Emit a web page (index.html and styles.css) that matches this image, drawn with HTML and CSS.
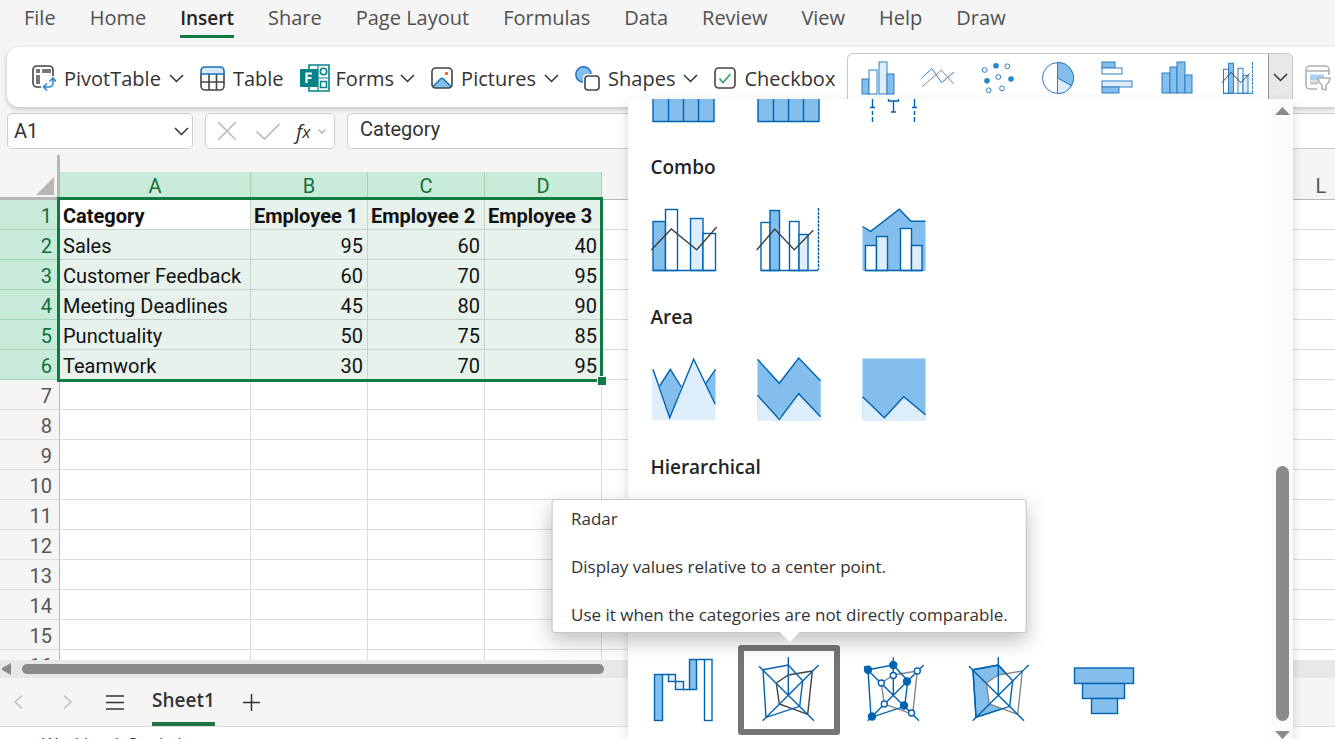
FILE: index.html
```html
<!DOCTYPE html>
<html lang="en">
<head>
    <meta charset="UTF-8">
    <meta name="viewport" content="width=device-width, initial-scale=1.0">
    <title>Spreadsheet</title>
    <link rel="stylesheet" href="styles.css">
</head>
<body>

    <nav class="menu">
        <button>File</button>
        <button>Home</button>
        <button class="active">Insert</button>
        <button>Share</button>
        <button>Page Layout</button>
        <button>Formulas</button>
        <button>Data</button>
        <button>Review</button>
        <button>View</button>
        <button>Help</button>
        <button>Draw</button>
    </nav>

    <div class="toolbar">
        <button class="tool">
            <svg width="24" height="26" viewBox="0 0 24 26" fill="none">
                <path d="M9 22H5a4 4 0 0 1-4-4V5a4 4 0 0 1 4-4h12a4 4 0 0 1 4 4v6" stroke="#444" stroke-width="1.6"/>
                <path d="M4 4h4v4H4zM10 4h9v4h-9zM4 10h4v9H4z" fill="#777"/>
                <path d="M12 22h5a4 4 0 0 0 4-4v-4M15 18.500l-3.500 3.500 3.500 3.500M17.500 16.500L21 13l3 3.500" stroke="#2b88d8" stroke-width="1.600"/>
            </svg>
            PivotTable
            <svg class="chevron" width="15" height="9" viewBox="0 0 15 9"><path d="M1 1l6.500 6.500L14 1"/></svg>
        </button>
        <button class="tool">
            <svg width="25" height="25" viewBox="0 0 25 25" fill="none">
                <path d="M1 8V5a4 4 0 0 1 4-4h15a4 4 0 0 1 4 4v3z" fill="#d5e9fb"/>
                <path d="M1 8v12a4 4 0 0 0 4 4h15a4 4 0 0 0 4-4V8M1 16h23M9 8v16M16.500 8v16" stroke="#444" stroke-width="1.600"/>
                <path d="M1 8V5a4 4 0 0 1 4-4h15a4 4 0 0 1 4 4v3z" stroke="#1a6fbb" stroke-width="1.600"/>
            </svg>
            Table
        </button>
        <button class="tool forms">
            <svg width="30" height="28" viewBox="0 0 30 28" fill="none">
                <path d="M9 1h20v26H9z" fill="#fff" stroke="#038387" stroke-width="1.600"/>
                <path d="M18 1v26M18 14h11" stroke="#038387" stroke-width="1.200"/>
                <circle cx="23.500" cy="7.500" r="3.200" stroke="#038387" stroke-width="1.600"/>
                <path d="M20.500 17.500h6v6h-6z" stroke="#038387" stroke-width="1.600"/>
                <rect y="5" width="18" height="18" rx="1" fill="#038387"/>
                <path d="M6.500 19V9.500h5.500M6.500 14h5" stroke="#fff" stroke-width="2.200"/>
            </svg>
            Forms
            <svg class="chevron" width="15" height="9" viewBox="0 0 15 9"><path d="M1 1l6.500 6.500L14 1"/></svg>
        </button>
        <button class="tool">
            <svg width="22" height="22" viewBox="0 0 22 22" fill="none">
                <path d="M2 19.500l7.500-7.500q1.500-1.500 3 0l7.500 7.500L18 21H4z" fill="#83beec"/>
                <path d="M2 19.500l7.500-7.500q1.500-1.500 3 0l7.500 7.500" stroke="#1a6fbb" stroke-width="1.500"/>
                <rect x="1" y="1" width="20" height="20" rx="3.500" stroke="#444" stroke-width="1.600"/>
                <circle cx="15.500" cy="6.500" r="1.700" fill="#e06c1f"/>
            </svg>
            Pictures
            <svg class="chevron" width="15" height="9" viewBox="0 0 15 9"><path d="M1 1l6.500 6.500L14 1"/></svg>
        </button>
        <button class="tool">
            <svg width="25" height="25" viewBox="0 0 25 25" fill="none">
                <circle cx="8.500" cy="8.500" r="7.700" fill="#83beec" stroke="#1a6fbb" stroke-width="1.500"/>
                <rect x="8" y="8" width="18" height="18" rx="4" fill="#fff"/>
                <rect x="10" y="10" width="14" height="14" rx="3" stroke="#444" stroke-width="1.600"/>
            </svg>
            Shapes
            <svg class="chevron" width="15" height="9" viewBox="0 0 15 9"><path d="M1 1l6.500 6.500L14 1"/></svg>
        </button>
        <button class="tool last">
            <svg width="22" height="22" viewBox="0 0 22 22" fill="none">
                <rect x="1" y="1" width="20" height="20" rx="3.500" stroke="#444" stroke-width="1.600"/>
                <path d="M5.500 11.500l3.500 4 7.500-8.500" stroke="#2ea158" stroke-width="1.500"/>
            </svg>
            Checkbox
        </button>

        <div class="gallery">
            <button aria-label="Column">
                <svg class="small" viewBox="0 0 32 32">
                    <rect class="b" x="0" y="17" width="7" height="15"/>
                    <rect class="w" x="7" y="8" width="8" height="24"/>
                    <rect class="l" x="17" y="0" width="8" height="32"/>
                    <rect class="b" x="25" y="12" width="7" height="20"/>
                </svg>
            </button>
            <button aria-label="Line">
                <svg class="small" viewBox="0 0 32 32">
                    <path class="g" d="M0 24.700L19.300 8.300 31.700 21.700"/>
                    <path class="n" d="M0 15.700L10 6.700l9.700 14L32 10"/>
                </svg>
            </button>
            <button aria-label="Scatter">
                <svg class="small" viewBox="0 0 32 32">
                    <circle class="w" cx="2.700" cy="8" r="2.400"/>
                    <circle class="w" cx="25.300" cy="4.300" r="2.400"/>
                    <circle class="w" cx="16.300" cy="15" r="2.400"/>
                    <circle class="w" cx="20" cy="26.300" r="2.400"/>
                    <circle class="w" cx="6.700" cy="28.300" r="2.400"/>
                    <circle class="dot" cx="14" cy="3.700" r="2.800"/>
                    <circle class="dot" cx="5" cy="18.700" r="2.800"/>
                    <circle class="dot" cx="29" cy="17" r="2.800"/>
                </svg>
            </button>
            <button aria-label="Pie">
                <svg class="small" viewBox="0 0 32 32">
                    <circle class="w" cx="16" cy="16" r="15.500"/>
                    <path class="b" d="M15.500 16V.500A15.500 15.500 0 0 1 29.400 23.700z"/>
                    <path class="l" d="M15.500 16l13.900 7.700A15.500 15.500 0 0 1 15.500 31.500z"/>
                </svg>
            </button>
            <button aria-label="Bar">
                <svg class="small" viewBox="0 0 32 32">
                    <rect class="b" x="0" y="0" width="13" height="6"/>
                    <rect class="w" x="0" y="6" width="20" height="6"/>
                    <rect class="l" x="0" y="19" width="30" height="6"/>
                    <rect class="b" x="0" y="25" width="17" height="6"/>
                </svg>
            </button>
            <button aria-label="Histogram">
                <svg class="small" viewBox="0 0 32 32">
                    <rect class="b" x="0" y="11" width="8" height="20"/>
                    <rect class="b" x="8" y="5" width="7" height="26"/>
                    <rect class="b" x="15" y="0" width="8" height="31"/>
                    <rect class="b" x="23" y="13" width="7" height="18"/>
                </svg>
            </button>
            <button aria-label="Combo">
                <svg class="small" viewBox="0 0 32 32">
                    <rect class="w" x="1.500" y="7.300" width="5" height="24"/>
                    <rect class="b" x="6.500" y="1.300" width="5" height="30"/>
                    <rect class="w" x="16" y="6.300" width="5" height="25"/>
                    <rect class="l" x="21" y="13.300" width="5" height="18"/>
                    <path class="n" d="M1 31.300h30"/>
                    <path class="n dash" d="M30.500 0v31"/>
                    <path class="k" d="M0 20.700L9 10.300l9.700 10.400 9.300-9.400"/>
                </svg>
            </button>
            <button class="more" aria-label="More charts">
                <svg class="chevron" width="15" height="9" viewBox="0 0 15 9"><path d="M1 1l6.500 6.500L14 1"/></svg>
            </button>

            <div class="charts">
                <div class="chart-list">
                    <div class="chart-row cut">
                        <button aria-label="Histogram chart">
                            <svg width="64" height="24" viewBox="0 0 64 24"><path class="b" d="M1-4h61v26.500H1zM16.500-4v26M31.500-4v26M46.500-4v26"/></svg>
                        </button>
                        <button aria-label="Pareto chart">
                            <svg width="64" height="24" viewBox="0 0 64 24"><path class="b" d="M1-4h61v26.500H1zM16.500-4v26M31.500-4v26M46.500-4v26"/></svg>
                        </button>
                        <button aria-label="Box chart">
                            <svg width="64" height="24" viewBox="0 0 64 24">
                                <path class="n" d="M10.500-2V8.500M8 8.500h5M52.500-2V8.500M50 8.500h5M26.500 0v2h10V0M31.500 2v11M29 13h5"/>
                                <path class="n" d="M10.500 12v4M10.500 18v5M52.500 12v4M52.500 18v5"/>
                            </svg>
                        </button>
                    </div>

                    <section>
                        <h3>Combo</h3>
                        <div class="chart-row">
                            <button aria-label="Column and line">
                                <svg width="64" height="64" viewBox="0 0 64 64">
                                    <rect class="b" x="1" y="13.500" width="12.500" height="49"/>
                                    <rect class="w" x="13.500" y="1.500" width="12" height="61"/>
                                    <rect class="l" x="38.500" y="10.500" width="12.500" height="52"/>
                                    <rect class="w" x="51" y="25.500" width="12.500" height="37"/>
                                    <path class="n" d="M1 62.500h62"/>
                                    <path class="k" d="M-.700 42l20-21 25.400 20.700 20-22.700"/>
                                </svg>
                            </button>
                            <button aria-label="Column and line on secondary axis">
                                <svg width="64" height="64" viewBox="0 0 64 64">
                                    <rect class="w" x="4" y="14.500" width="9" height="48"/>
                                    <rect class="b" x="13" y="2.500" width="9.500" height="60"/>
                                    <rect class="w" x="32.500" y="13.500" width="9.500" height="49"/>
                                    <rect class="l" x="42" y="26.500" width="9" height="36"/>
                                    <path class="n" d="M4 62.500h57"/>
                                    <path class="n dash" d="M61.500 0v62"/>
                                    <path class="k" d="M-.300 42l18-21 19.600 20.700 19-19.400"/>
                                </svg>
                            </button>
                            <button aria-label="Area and column">
                                <svg width="64" height="64" viewBox="0 0 64 64">
                                    <path fill="#83beec" d="M.500 19l8.200 4.300 28.600-22 11.700 12h14.500V63H.500z"/>
                                    <path class="n" d="M.500 18.500l8.200 4.800 28.600-22 11.700 12h14.500"/>
                                    <rect class="w" x="3.500" y="37.500" width="11" height="25"/>
                                    <rect class="l" x="14.500" y="28.500" width="11" height="34"/>
                                    <rect class="w" x="38.500" y="20.500" width="11" height="42"/>
                                    <rect class="l" x="49.500" y="37.500" width="10.500" height="25"/>
                                    <path class="n" d="M3 62.500h58"/>
                                </svg>
                            </button>
                        </div>
                    </section>

                    <section>
                        <h3>Area</h3>
                        <div class="chart-row">
                            <button aria-label="Area chart">
                                <svg width="64" height="64" viewBox="0 0 64 64">
                                    <path fill="#ddedfb" d="M0 11l1 .300 16.700 48.400L41.700 1.300 63.500 46v16H0z"/>
                                    <path fill="#83beec" d="M7.700 28l10.600-16.700L29.300 29 17.700 59.700zM63.500 11.300L53.700 25.700l9.800 20z"/>
                                    <path class="n" d="M7.700 28l10.600-16.700L29.300 29M63.500 11.300L53.700 25.700"/>
                                    <path class="n" d="M1 11.300l16.700 48.400L41.700 1.300l21.500 45"/>
                                </svg>
                            </button>
                            <button aria-label="Stacked area">
                                <svg width="64" height="64" viewBox="0 0 64 64">
                                    <path fill="#83beec" d="M.500 1.300l21.800 24L41.700 0l22 22.700v36H.500z"/>
                                    <path fill="#ddedfb" d="M.500 37.300l21.800 24 19.400-25.600 22 23V63H.500z"/>
                                    <path class="n" d="M.500 1.300l21.800 24L41.700 0l21.800 22.700M.500 37.300l21.800 24 19.400-25.600 21.800 23"/>
                                </svg>
                            </button>
                            <button aria-label="100% stacked area">
                                <svg width="64" height="64" viewBox="0 0 64 64">
                                    <path fill="#83beec" d="M.500.500h63V60H.500z"/>
                                    <path fill="#ddedfb" d="M.500 38.700l21.800 21 19.400-21 21.800 18V63H.500z"/>
                                    <path class="n" d="M.500 38.700l21.800 21 19.400-21 21.800 18"/>
                                </svg>
                            </button>
                        </div>
                    </section>

                    <section>
                        <h3>Hierarchical</h3>
                    </section>

                    <section class="other">
                        <div class="chart-row">
                            <button aria-label="Waterfall">
                                <svg width="64" height="64" viewBox="0 0 64 64">
                                    <rect class="b" x="2.500" y="16.500" width="8" height="46"/>
                                    <rect class="l" x="16.500" y="16.500" width="7" height="7"/>
                                    <rect class="l" x="23.500" y="23.500" width="8" height="8"/>
                                    <path class="n" d="M10 16.500h7M31 31.500h7M45 1.500h8"/>
                                    <rect class="b" x="37.500" y="1.500" width="7" height="30"/>
                                    <rect class="w" x="52.500" y="1.500" width="7.500" height="61"/>
                                </svg>
                            </button>
                            <div class="tip-anchor">
                                <button class="selected" aria-label="Radar" aria-describedby="radarTip">
                                    <svg width="64" height="64" viewBox="0 0 64 64">
                                        <path class="k thin" d="M55.300 13l-24 4-12 8 3 21 28.400 10.300z"/>
                                        <path class="n" d="M6 11.700L31.300 7l14.400 15.700-3 25.600L9 59.300z"/>
                                        <path class="n" d="M31.300-.700V37M2 8.300l55 54.400M61.700 7l-56 55.700"/>
                                    </svg>
                                </button>
                                <div class="tooltip" id="radarTip" role="tooltip">
                                    <p>Radar</p>
                                    <p>Display values relative to a center point.</p>
                                    <p>Use it when the categories are not directly comparable.</p>
                                </div>
                            </div>
                            <button aria-label="Radar with markers">
                                <svg width="64" height="64" viewBox="0 0 64 64">
                                    <path class="g" d="M55.300 13l-24 4-12 8 3 21 28.400 10.300z"/>
                                    <path class="n" d="M6 11.700L31.300 7l14.400 15.700-3 25.600L9 59.300z"/>
                                    <path class="n" d="M31.300-.700V37M2 8.300l55 54.400M61.700 7l-56 55.700"/>
                                    <circle class="mark" cx="6" cy="11.700" r="3.500"/>
                                    <circle class="mark" cx="31.300" cy="7" r="3.500"/>
                                    <circle class="mark" cx="45" cy="23.500" r="3.500"/>
                                    <circle class="mark" cx="42" cy="47.500" r="3.500"/>
                                    <circle class="mark" cx="10" cy="58.500" r="3.500"/>
                                    <circle class="w" cx="55.300" cy="13" r="3"/>
                                    <circle class="w" cx="31.300" cy="17.500" r="3"/>
                                    <circle class="w" cx="19.300" cy="25" r="3"/>
                                    <circle class="w" cx="22.300" cy="46" r="3"/>
                                    <circle class="w" cx="49.500" cy="55" r="3"/>
                                </svg>
                            </button>
                            <button aria-label="Filled radar">
                                <svg width="64" height="64" viewBox="0 0 64 64">
                                    <path class="b" d="M6 11.700L31.300 7l14.400 15.700-3 25.600L9 59.300z"/>
                                    <path class="g white" d="M55.300 13l-24 4-12 8 3 21 28.400 10.300z"/>
                                    <path class="n" d="M6 11.700L31.300 7l14.400 15.700-3 25.600L9 59.300z"/>
                                    <path class="n" d="M31.300-.700V37M2 8.300l55 54.400M61.700 7l-56 55.700"/>
                                </svg>
                            </button>
                            <button aria-label="Funnel">
                                <svg width="64" height="64" viewBox="0 0 64 64">
                                    <rect class="b" x="2.500" y="10" width="59" height="15.500"/>
                                    <rect class="b" x="10.500" y="25.500" width="42" height="15"/>
                                    <rect class="b" x="19.500" y="40.500" width="26" height="15"/>
                                </svg>
                            </button>
                        </div>
                    </section>
                </div>
                <div class="vscroll">
                    <svg width="15" height="8" viewBox="0 0 15 8"><path d="M0 8L7.500 0 15 8z" fill="#8a8a8a"/></svg>
                    <div class="vthumb"></div>
                    <svg width="15" height="8" viewBox="0 0 15 8"><path d="M0 0h15L7.500 8z" fill="#8a8a8a"/></svg>
                </div>
            </div>
        </div>

        <button class="slicer" aria-label="Slicer">
            <svg width="26" height="26" viewBox="0 0 26 26" fill="none" stroke="#b0b0b0" stroke-width="1.600">
                <path d="M12 24H5a4 4 0 0 1-4-4V5a4 4 0 0 1 4-4h15a4 4 0 0 1 4 4v5M1 6h23"/>
                <path d="M5 11h14M5 14h8" stroke="#a9d0ee" stroke-width="3"/>
                <path d="M5 18h8" stroke="#c4c4c4" stroke-width="3"/>
                <path d="M13 13h12l-1 4-3 3v5l-4-1v-4l-3-3z" fill="#fff"/>
            </svg>
        </button>
    </div>

    <div class="formula-bar">
        <div class="name-box">
            <input type="text" value="A1" aria-label="Name box">
            <button aria-label="Open name list"><svg class="chevron" width="15" height="9" viewBox="0 0 15 9"><path d="M1 1l6.500 6.500L14 1"/></svg></button>
        </div>
        <div class="fx-box">
            <button aria-label="Cancel"><svg width="18" height="18" viewBox="0 0 18 18"><path d="M0 0l18 18M18 0L0 18" stroke="#b5b5b5" stroke-width="1.500"/></svg></button>
            <button aria-label="Enter"><svg width="24" height="17" viewBox="0 0 24 17" fill="none"><path d="M.500 8.500l8 7.500L23.500 1" stroke="#b5b5b5" stroke-width="1.500"/></svg></button>
            <button class="fx" aria-label="Insert function"><i>f</i><sub>x</sub><svg width="8" height="5" viewBox="0 0 8 5" fill="none"><path d="M.500.500L4 4 7.500.500" stroke="#b0b0b0" stroke-width="1.300"/></svg></button>
        </div>
        <input class="formula" type="text" value="Category" aria-label="Formula">
    </div>

    <div class="sheet">
        <table>
            <colgroup>
                <col class="col-num"><col class="col-a"><col class="col-n"><col class="col-n"><col class="col-n"><col><col class="col-l">
            </colgroup>
            <thead>
                <tr class="spacer"><td class="corner" rowspan="2"><svg width="18" height="18" viewBox="0 0 18 18"><path d="M18 0v18H0z" fill="#b7b7b7"/></svg></td><td colspan="6"></td></tr>
                <tr><th class="sel">A</th><th class="sel">B</th><th class="sel">C</th><th class="sel">D</th><th></th><th>L</th></tr>
            </thead>
            <tbody>
                <tr class="sel title"><th>1</th><td class="current">Category</td><td>Employee 1</td><td>Employee 2</td><td>Employee 3</td><td></td><td></td></tr>
                <tr class="sel"><th>2</th><td>Sales</td><td>95</td><td>60</td><td>40</td><td></td><td></td></tr>
                <tr class="sel"><th>3</th><td>Customer Feedback</td><td>60</td><td>70</td><td>95</td><td></td><td></td></tr>
                <tr class="sel"><th>4</th><td>Meeting Deadlines</td><td>45</td><td>80</td><td>90</td><td></td><td></td></tr>
                <tr class="sel"><th>5</th><td>Punctuality</td><td>50</td><td>75</td><td>85</td><td></td><td></td></tr>
                <tr class="sel"><th>6</th><td>Teamwork</td><td>30</td><td>70</td><td>95</td><td></td><td></td></tr>
                <tr><th>7</th><td></td><td></td><td></td><td></td><td></td><td></td></tr>
                <tr><th>8</th><td></td><td></td><td></td><td></td><td></td><td></td></tr>
                <tr><th>9</th><td></td><td></td><td></td><td></td><td></td><td></td></tr>
                <tr><th>10</th><td></td><td></td><td></td><td></td><td></td><td></td></tr>
                <tr><th>11</th><td></td><td></td><td></td><td></td><td></td><td></td></tr>
                <tr><th>12</th><td></td><td></td><td></td><td></td><td></td><td></td></tr>
                <tr><th>13</th><td></td><td></td><td></td><td></td><td></td><td></td></tr>
                <tr><th>14</th><td></td><td></td><td></td><td></td><td></td><td></td></tr>
                <tr><th>15</th><td></td><td></td><td></td><td></td><td></td><td></td></tr>
                <tr><th>16</th><td></td><td></td><td></td><td></td><td></td><td></td></tr>
            </tbody>
        </table>
        <div class="selection"></div>
    </div>

    <div class="hscroll">
        <svg width="9" height="12" viewBox="0 0 9 12"><path d="M9 0v12L0 7V5z" fill="#8a8a8a"/></svg>
        <div class="hthumb"></div>
    </div>

    <div class="sheet-tabs">
        <button class="arrow" aria-label="Previous sheet"><svg width="9" height="14" viewBox="0 0 9 14" fill="none"><path d="M8 .500L1 7l7 6.500" stroke="#bbb" stroke-width="1.400"/></svg></button>
        <button class="arrow" aria-label="Next sheet"><svg width="9" height="14" viewBox="0 0 9 14" fill="none"><path d="M1 .500L8 7l-7 6.500" stroke="#bbb" stroke-width="1.400"/></svg></button>
        <button class="list" aria-label="All sheets"><svg width="18" height="15" viewBox="0 0 18 15"><path d="M0 1h18M0 7.500h18M0 14h18" stroke="#333" stroke-width="1.500"/></svg></button>
        <button class="tab">Sheet1</button>
        <button class="add" aria-label="New sheet"><svg width="17" height="17" viewBox="0 0 17 17"><path d="M8.500 0v17M0 8.500h17" stroke="#333" stroke-width="1.500"/></svg></button>
    </div>

    <footer class="status">Workbook Statistics</footer>

</body>
</html>
```
FILE: styles.css
```css
* {
    margin: 0;
    padding: 0;
    box-sizing: border-box;
}

body {
    display: flex;
    flex-direction: column;
    height: 100vh;
    overflow: hidden;
    background-color: #f5f5f5;
    font-family: "Open Sans", "Noto Sans", sans-serif;
    font-size: 20px;
    color: #333;
}

button, input {
    font: inherit;
    color: inherit;
    background: none;
    border: none;
    outline: none;
}

button {
    cursor: pointer;
}

svg {
    display: block;
    flex: none;
}

.chevron {
    fill: none;
    stroke: #333;
    stroke-width: 1.5;
}

/* menu */
.menu {
    display: flex;
    flex: none;
    gap: 34px;
    height: 47px;
    padding-left: 24px;
    color: #505050;
}

.menu button {
    height: 38px;
    border-bottom: 3px solid transparent;
    white-space: nowrap;
}

.menu .active {
    font-size: 19px;
    font-weight: 600;
    color: #242424;
    border-color: #107c41;
}

/* toolbar */
.toolbar {
    position: relative;
    z-index: 2;
    display: flex;
    flex: none;
    height: 60px;
    margin-left: 7px;
    padding: 6px 0 0 25px;
    background-color: #fff;
    border-radius: 12px 0 0 12px;
    box-shadow: 0 2px 5px rgba(0, 0, 0, 0.22);
}

.tool {
    display: flex;
    flex: none;
    align-items: center;
    gap: 8px;
    height: 50px;
    margin-right: 16px;
    white-space: nowrap;
}

.forms {
    gap: 6px;
}

.last {
    margin-right: 12px;
}

.gallery {
    position: relative;
    display: flex;
    flex: none;
    height: 46px;
    border: 1px solid #c8c8c8;
    border-bottom: none;
    border-radius: 6px 6px 0 0;
}

.gallery > button {
    display: flex;
    align-items: center;
    justify-content: center;
    width: 60px;
    padding-top: 2px;
}

.gallery > .more {
    width: 24px;
    background-color: #e8e8e8;
    border-left: 1px solid #9a9a9a;
    border-radius: 0 6px 0 0;
}

.small {
    width: 32px;
    height: 32px;
}

.slicer {
    flex: none;
    height: 50px;
    margin-left: 12px;
}

/* chart icon parts */
.chart-row svg {
    overflow: visible;
    stroke: #0063b1;
    stroke-width: 1.4;
    fill: none;
}

.small {
    overflow: visible;
    stroke: #2e7ec0;
    stroke-width: 1;
    fill: none;
}

.chart-row.cut svg {
    overflow: hidden;
}

.b { fill: #83beec; }
.l { fill: #ddedfb; }
.w, .white { fill: #fff; }
.g { stroke: #888; }
.k { stroke: #404040; }
.dot { fill: #2188cc; stroke: none; }
.mark { fill: #0063b1; }
.dash { stroke-dasharray: 3 1; }
.chart-row path[fill] { stroke: none; }

/* chart menu */
.charts {
    position: absolute;
    top: 45px;
    right: -1px;
    display: flex;
    width: 665px;
    height: calc(100vh - 99px);
    background-color: #fff;
    box-shadow: 0 4px 10px rgba(0, 0, 0, 0.16);
}

.chart-list {
    flex: 1;
}

.chart-list section {
    height: 150px;
}

.chart-list h3 {
    height: 46px;
    padding-left: 22px;
    font-size: 19px;
    font-weight: 600;
    line-height: 36px;
    color: #242424;
}

.chart-list .other {
    height: auto;
    padding-top: 46px;
}

.chart-row {
    display: flex;
    gap: 3px;
    padding-left: 5px;
}

.chart-row button {
    display: flex;
    align-items: center;
    justify-content: center;
    width: 102px;
    height: 90px;
}

.chart-row.cut {
    height: 50px;
}

.chart-row.cut button {
    height: 24px;
}

.chart-row .selected {
    background-color: #fff;
    border: 6px solid #757573;
    border-radius: 3px;
}

.tip-anchor {
    position: relative;
}

.tooltip {
    position: absolute;
    bottom: 102px;
    left: 50%;
    transform: translateX(-50%);
    display: flex;
    flex-direction: column;
    gap: 24px;
    padding: 7px 18px 5px;
    background-color: #fff;
    border: 1px solid #c6c6c6;
    border-radius: 3px;
    box-shadow: 0 8px 20px rgba(0, 0, 0, 0.25);
    font-size: 17px;
    line-height: 24px;
    white-space: nowrap;
}

.tooltip::after {
    content: "";
    position: absolute;
    top: 100%;
    left: 50%;
    margin-left: -10px;
    border: 10px solid transparent;
    border-top-color: #fff;
    border-bottom: none;
}

.vscroll {
    display: flex;
    flex-direction: column;
    align-items: center;
    width: 22px;
    padding-top: 8px;
    background-color: #fbfbfb;
}

.vthumb {
    width: 13px;
    height: 255px;
    margin: auto 0 10px;
    background-color: #8a8a8a;
    border-radius: 7px;
}

/* formula bar */
.formula-bar {
    display: flex;
    flex: none;
    gap: 12px;
    height: 48px;
    padding: 6px 0 6px 7px;
    font-family: Roboto, sans-serif;
}

.name-box, .fx-box, .formula {
    background-color: #fff;
    border: 1px solid #cdcdcd;
    border-radius: 5px;
}

.name-box {
    display: flex;
    align-items: center;
    width: 186px;
    padding: 0 3px 0 6px;
}

.name-box input {
    flex: 1;
    min-width: 0;
}

.fx-box {
    display: flex;
    align-items: center;
    gap: 20px;
    width: 130px;
    padding: 0 6px 0 12px;
}

.fx {
    display: flex;
    align-items: center;
    margin-left: -4px;
    font-family: "Open Sans", sans-serif;
    font-style: italic;
}

.fx sub {
    margin-right: 8px;
    font-size: 17px;
}

.formula {
    flex: 1;
    padding: 0 12px 5px;
    border-right: none;
    border-radius: 5px 0 0 5px;
}

/* sheet */
.sheet {
    position: relative;
    flex: 1;
    min-height: 0;
    overflow: hidden;
    font-family: Roboto, sans-serif;
}

table {
    width: 100%;
    table-layout: fixed;
    border-collapse: separate;
    border-spacing: 0;
}

.col-num { width: 60px; }
.col-a { width: 191px; }
.col-n { width: 117px; }
.col-l { width: 28px; }

.spacer td {
    height: 17px;
    background-color: #f5f5f5;
    border: none;
}

.spacer .corner {
    padding: 20px 3px 0 36px;
    border-right: 3px solid #b7b7b7;
    border-bottom: 3px solid #b7b7b7;
}

thead th {
    height: 28px;
    font-weight: normal;
    color: #555;
    border-bottom: 1px solid #b7b7b7;
}

thead .sel {
    background-color: #c9ebd9;
    border-right: 1px solid #a3d3ba;
    color: #0f703b;
}

tbody th, tbody td {
    height: 30px;
    padding-top: 3px;
    line-height: 24px;
    border-bottom: 1px solid #dcdcdc;
}

tbody th {
    padding-right: 7px;
    font-weight: normal;
    text-align: right;
    color: #555;
    background-color: #f5f5f5;
    border-right: 1px solid #b7b7b7;
}

tbody td {
    padding-left: 3px;
    padding-right: 4px;
    text-align: right;
    white-space: nowrap;
    color: #111;
    background-color: #fff;
    border-right: 1px solid #dcdcdc;
}

tbody td:nth-child(2), .title td {
    text-align: left;
}

tbody td:nth-child(n+6) {
    border-right: none;
}

.sel th {
    color: #0f703b;
    background-color: #c9ebd9;
    border-bottom-color: #a3d3ba;
}

.sel td:nth-child(-n+5) {
    background-color: #e7f2ec;
    border-color: #c5d3cb;
}

.title td {
    font-weight: bold;
}

.sel .current:nth-child(2) {
    background-color: #fff;
}

.selection {
    position: absolute;
    top: 42px;
    left: 57px;
    width: 546px;
    height: 185px;
    border: 3px solid #107c41;
}

.selection::after {
    content: "";
    position: absolute;
    right: -6px;
    bottom: -6px;
    width: 8px;
    height: 8px;
    background-color: #107c41;
    border: solid #fff;
    border-width: 1px 0 0 1px;
}

/* bottom bars */
.hscroll {
    display: flex;
    flex: none;
    align-items: center;
    gap: 11px;
    height: 18px;
    padding-left: 2px;
    background-color: #e8e8e8;
}

.hthumb {
    width: 582px;
    height: 10px;
    background-color: #8a8a8a;
    border-radius: 5px;
}

.sheet-tabs {
    display: flex;
    flex: none;
    align-items: center;
    height: 49px;
    padding-left: 14px;
    border-bottom: 1px solid #dcdcdc;
}

.arrow {
    margin-right: 40px;
}

.list {
    margin: 0 28px 0 -6px;
}

.tab {
    height: 48px;
    border-bottom: 4px solid #217346;
    font-size: 19px;
    font-weight: 600;
}

.add {
    margin-left: 28px;
}

.status {
    flex: none;
    height: 12px;
    padding: 5px 0 0 42px;
    overflow: hidden;
    background-color: #fff;
    font-size: 17px;
    line-height: 24px;
}
```
